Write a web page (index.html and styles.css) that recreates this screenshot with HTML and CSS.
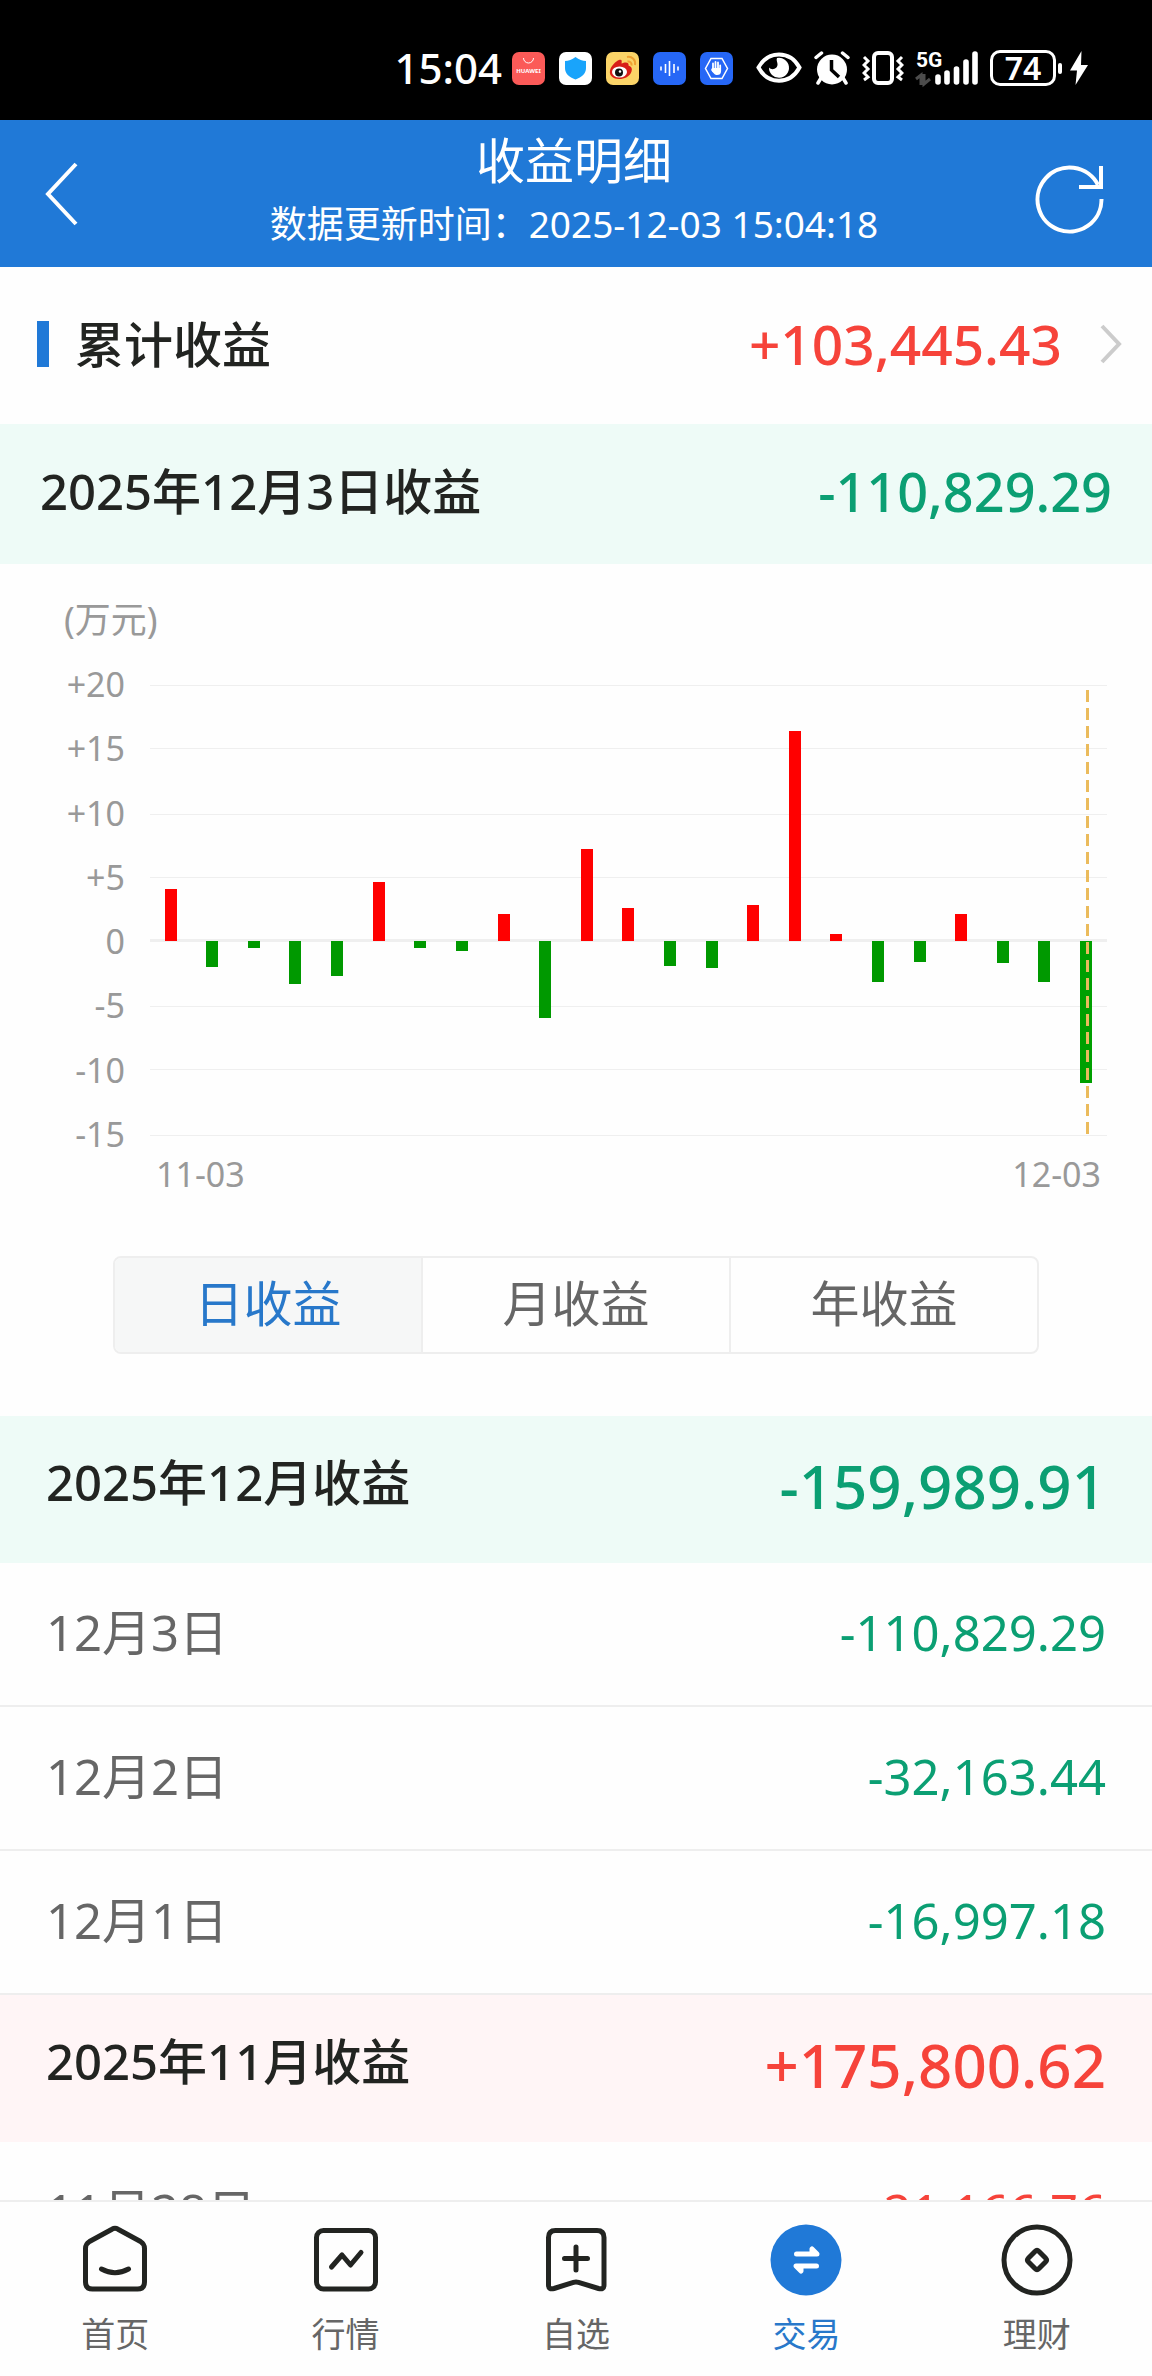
FILE: index.html
```html
<!DOCTYPE html>
<html lang="zh-CN">
<head>
<meta charset="utf-8">
<meta name="viewport" content="width=device-width, initial-scale=1">
<title>收益明细</title>
<link rel="stylesheet" href="styles.css">
</head>
<body>
<div class="status">
  <span class="status-time">15:04</span>
  <div class="status-apps">
    <svg class="app" viewBox="0 0 33 33"><rect width="33" height="33" rx="7" fill="#fb5a58"/><path d="M11.500 6a5 5 0 0 0 10 0" fill="none" stroke="#fff" stroke-width="1"/><text x="16.500" y="21" class="app-brand">HUAWEI</text></svg>
    <svg class="app" viewBox="0 0 33 33"><rect width="33" height="33" rx="7" fill="#fff"/><path d="M16.500 5c3.500 2.800 7 3.800 10.500 4v7c0 5.500-4 9-10.500 11.500C10 25 6 21.500 6 16V9c3.500-.2 7-1.200 10.500-4z" fill="#19a4fb"/></svg>
    <svg class="app" viewBox="0 0 33 33"><rect width="33" height="33" rx="7" fill="#fbd468"/><path d="M21 5c5-1 9 3 8 8M21.500 9.500c2.500-.5 4.500 1.500 4 4" fill="none" stroke="#f0a030" stroke-width="2"/><path d="M13 8c3-1 3 1 2.500 3.500 3-1.500 8-2 7 2 3 1 4 3 3 6-1.500 5-7 7.500-12.500 7.500S3 24 4 18.500C5 14 10 9 13 8z" fill="#d81e18"/><ellipse cx="13.500" cy="20" rx="7.500" ry="5.500" fill="#fff"/><circle cx="13" cy="20.500" r="4" fill="#111"/><circle cx="14" cy="19.500" r="1.200" fill="#fff"/></svg>
    <svg class="app" viewBox="0 0 33 33"><rect width="33" height="33" rx="7" fill="#2667f6"/><path d="M8 14.500v4M12.500 12v9M16.500 9v15M21 12v9M25 14.500v4" stroke="#fff" stroke-width="1.600"/></svg>
    <svg class="app" viewBox="0 0 33 33"><rect width="33" height="33" rx="7" fill="#2667f6"/><path d="M11 6.500h11l5.500 10-5.500 10H11l-5.500-10z" fill="none" stroke="#fff" stroke-width="1.500"/><path d="M13 19v-7.500M15.500 18v-8M18 18v-7.500M20.200 19v-5.500" stroke="#fff" stroke-width="1.800" stroke-linecap="round"/><path d="M12 16h9v3c0 3-1.500 4-4 4-2 0-3-1-6-5z" fill="#fff"/></svg>
  </div>
  <div class="status-icons">
    <svg width="46" height="33" viewBox="0 0 46 33"><path d="M2.500 16.500C12-1 34-1 43.500 16.500 34 34 12 34 2.500 16.500z" fill="none" stroke="#fff" stroke-width="4"/><path d="M21 7a10 10 0 1 1-8 9.500c3 3.500 9 1 8.500-3.500C21.400 11 20 9 21 7z" fill="#fff"/></svg>
    <svg width="36" height="34" viewBox="0 0 36 34"><circle cx="18" cy="18.500" r="15" fill="#fff"/><path d="M7 27l-3 5M29 27l3 5M2 6.500L7.500 2M34 6.500L28.500 2" stroke="#fff" stroke-width="3.500" stroke-linecap="round"/><path d="M17.500 9v10l7.500 7" fill="none" stroke="#000" stroke-width="3.500"/></svg>
    <svg width="42" height="34" viewBox="0 0 42 34"><rect x="12" y="2" width="18" height="30" rx="4" fill="none" stroke="#fff" stroke-width="4"/><path d="M2 6l4 4-4 4 4 4-4 4 4 4-4 3M40 6l-4 4 4 4-4 4 4 4-4 4 4 3" fill="none" stroke="#fff" stroke-width="3"/></svg>
    <svg class="signal" width="62" height="34" viewBox="0 0 62 34"><text x="0" y="16" class="net-label">5G</text><path d="M0 28l5-4v10M8 23v10l6-5" fill="none" stroke="#4c4c4c" stroke-width="3"/><path d="M22 26v5M31 22v9M40.500 18v13M50 11v20M59 3v28" stroke="#fff" stroke-width="5.600" stroke-linecap="round"/></svg>
  </div>
  <div class="battery">
    <span class="battery-level">74</span>
    <span class="battery-tip"></span>
    <svg width="18" height="34" viewBox="0 0 18 34"><path d="M11.500 0L0 19.500h7L5.500 34 18 14h-7z" fill="#fff"/></svg>
  </div>
</div>

<header class="header">
  <button class="icon-button" type="button" aria-label="返回"><svg width="35" height="64" viewBox="0 0 35 64"><path d="M32 2L4 32l28 30" fill="none" stroke="#fff" stroke-width="4"/></svg></button>
  <div class="header-text">
    <h1 class="title">收益明细</h1>
    <p class="updated">数据更新时间：2025-12-03 15:04:18</p>
  </div>
  <button class="icon-button refresh" type="button" aria-label="刷新"><svg width="70" height="70" viewBox="0 0 70 70"><path d="M67.500 35A32 32 0 1 1 64 21M67 2v21H45" fill="none" stroke="#fff" stroke-width="4"/></svg></button>
</header>

<main class="content">
  <a class="total" href="#">
    <span class="total-label">累计收益</span>
    <span class="total-value up">+103,445.43</span>
    <svg width="22" height="40" viewBox="0 0 22 40"><path d="M2 2l17 18L2 38" fill="none" stroke="#ccc" stroke-width="4"/></svg>
  </a>

  <section class="today">
    <h2 class="label">2025年12月3日收益</h2>
    <span class="today-value down">-110,829.29</span>
  </section>

  <section class="chart">
    <p class="unit">(万元)</p>
    <div class="plot">
      <div class="y-axis"><span>+20</span><span>+15</span><span>+10</span><span>+5</span><span>0</span><span>-5</span><span>-10</span><span>-15</span></div>
      <svg class="bars" viewBox="0 0 957 451">
        <g fill="#efefef"><rect y="0" width="957" height="1"/><rect y="63" width="957" height="1"/><rect y="129" width="957" height="1"/><rect y="192" width="957" height="1"/><rect y="254" width="957" height="3"/><rect y="321" width="957" height="1"/><rect y="384" width="957" height="1"/><rect y="450" width="957" height="1"/></g>
        <g fill="#f00"><rect x="15" y="204" width="12" height="52"/><rect x="223" y="197" width="12" height="59"/><rect x="348" y="229" width="12" height="27"/><rect x="431" y="164" width="12" height="92"/><rect x="472" y="223" width="12" height="33"/><rect x="597" y="220" width="12" height="36"/><rect x="639" y="46" width="12" height="210"/><rect x="680" y="249" width="12" height="7"/><rect x="805" y="229" width="12" height="27"/></g>
        <g fill="#090"><rect x="56" y="256" width="12" height="26"/><rect x="98" y="256" width="12" height="7"/><rect x="139" y="256" width="12" height="43"/><rect x="181" y="256" width="12" height="35"/><rect x="264" y="256" width="12" height="7"/><rect x="306" y="256" width="12" height="10"/><rect x="389" y="256" width="12" height="77"/><rect x="514" y="256" width="12" height="25"/><rect x="556" y="256" width="12" height="27"/><rect x="722" y="256" width="12" height="41"/><rect x="764" y="256" width="12" height="21"/><rect x="847" y="256" width="12" height="22"/><rect x="888" y="256" width="12" height="41"/><rect x="930" y="256" width="12" height="142" fill="#00a000"/></g>
        <path d="M937.500 5v444" stroke="#ebbb5c" stroke-width="3" stroke-dasharray="12 6"/>
      </svg>
    </div>
    <div class="x-axis"><span>11-03</span><span>12-03</span></div>
  </section>

  <div class="tabs" role="tablist">
    <button class="tab tab-active" type="button" role="tab" aria-selected="true">日收益</button>
    <button class="tab" type="button" role="tab" aria-selected="false">月收益</button>
    <button class="tab" type="button" role="tab" aria-selected="false">年收益</button>
  </div>

  <section>
    <div class="month month-down"><h2 class="label">2025年12月收益</h2><span class="month-value down">-159,989.91</span></div>
    <div class="day"><span>12月3日</span><span class="down">-110,829.29</span></div>
    <div class="day"><span>12月2日</span><span class="down">-32,163.44</span></div>
    <div class="day"><span>12月1日</span><span class="down">-16,997.18</span></div>
  </section>
  <section>
    <div class="month month-up"><h2 class="label">2025年11月收益</h2><span class="month-value up">+175,800.62</span></div>
    <div class="day"><span>11月28日</span><span class="up">+21,166.76</span></div>
  </section>
</main>

<nav class="nav">
  <a class="nav-item" href="#"><svg class="nav-icon" viewBox="0 0 72 72"><path d="M33 5.200q3-1.800 6 0l22.500 12.300q4 2.500 4 7V58q0 7-7 7h-45q-7 0-7-7V24.500q0-4.500 4-7zM22.500 45q13.500 7.500 27 0"/></svg>首页</a>
  <a class="nav-item" href="#"><svg class="nav-icon" viewBox="0 0 72 72"><rect x="6.500" y="6.500" width="59" height="58.500" rx="7"/><path d="M21.500 43L32 31l8.500 10L51 28.500"/></svg>行情</a>
  <a class="nav-item" href="#"><svg class="nav-icon" viewBox="0 0 72 72"><path d="M8.500 13.500q0-7 7-7h41.500q7 0 7 7V61q0 5-5.500 3.500L38.500 58.300q-2.500-.8-5 0L14 64.500Q8.500 66 8.500 61zM24.500 34.500h23M36 23v23"/></svg>自选</a>
  <a class="nav-item nav-active" href="#" aria-current="page"><svg class="nav-icon" viewBox="0 0 72 72"><circle cx="36" cy="36" r="35.500" fill="#2079d7" stroke="none"/><path d="M26.500 30H47l-5-5v5M46.500 42H26l5 5v-5" stroke="#fff"/></svg>交易</a>
  <a class="nav-item" href="#"><svg class="nav-icon" viewBox="0 0 72 72"><circle cx="36" cy="36" r="33"/><path d="M34 27.500q2-2 4 0l6.500 6.500q2 2 0 4L38 44.500q-2 2-4 0L27.500 38q-2-2 0-4z"/></svg>理财</a>
</nav>
</body>
</html>
```
FILE: styles.css
```css
* { box-sizing: border-box; }

body {
  margin: 0;
  height: 100vh;
  display: flex;
  flex-direction: column;
  background: #fefefe;
  color: #222421;
  font-family: "Noto Sans", "Noto Sans CJK SC", sans-serif;
  font-size: 49px;
  line-height: 60px;
}

h1, h2, p { margin: 0; font-weight: inherit; font-size: inherit; }
a { color: inherit; text-decoration: none; }
button { font: inherit; color: inherit; background: none; border: 0; padding: 0; }
svg { display: block; flex: none; }

.up { color: #f6433a; }
.down { color: #0b9f73; }

/* status bar */
.status {
  flex: none;
  height: 120px;
  padding: 16px 64px 0 0;
  display: flex;
  align-items: center;
  justify-content: flex-end;
  background: #000;
  color: #fff;
}
.status-time { font-size: 42px; font-weight: 500; margin-right: 10px; }
.status-apps { display: flex; gap: 14px; margin-right: 23px; }
.app { width: 33px; height: 33px; }
.app-brand { font-size: 6px; font-weight: 700; fill: #fff; text-anchor: middle; }
.status-icons { display: flex; gap: 12px; margin-right: 12px; }
.signal { overflow: visible; }
.net-label { font-family: Roboto, sans-serif; font-size: 21px; font-weight: 700; fill: #fff; }
.battery { display: flex; align-items: center; }
.battery-level {
  width: 66px;
  height: 36px;
  border: 3px solid #fff;
  border-radius: 10px;
  font-size: 32px;
  font-weight: 600;
  line-height: 30px;
  text-align: center;
}
.battery-tip { width: 4px; height: 11px; margin: 0 8px 0 2px; border-radius: 2px; background: #fff; }

/* page header */
.header {
  flex: none;
  height: 147px;
  padding: 0 48px 0 44px;
  display: flex;
  align-items: center;
  justify-content: space-between;
  background: #2079d7;
  color: #fff;
}
.icon-button { width: 70px; }
.refresh { padding-top: 10px; }
.header-text { text-align: center; }
.title { font-size: 49px; }
.updated { font-size: 37px; line-height: 68px; }

.content { flex: 1; min-height: 0; overflow-y: auto; scrollbar-width: none; }

/* cumulative total */
.total { height: 157px; padding: 0 30px 4px 37px; display: flex; align-items: center; }
.total-label { display: flex; align-items: center; gap: 26px; font-weight: 500; }
.total-label::before { content: ""; width: 12px; height: 46px; background: #2079d7; }
.total-value { margin: 0 38px 0 auto; font-size: 55px; font-weight: 500; }

.label { font-weight: 500; }
.today {
  height: 140px;
  padding: 0 40px 6px;
  display: flex;
  align-items: center;
  justify-content: space-between;
  background: #eefbf7;
}
.today-value { font-size: 54px; font-weight: 500; }

/* chart */
.chart { padding: 36px 45px 0 64px; color: #999; font-size: 34px; line-height: 40px; }
.unit { font-size: 36px; }
.plot { display: grid; grid-template-columns: 61px 1fr; column-gap: 25px; margin-top: 24px; }
.y-axis { display: flex; flex-direction: column; align-items: flex-end; justify-content: space-between; }
.bars { width: 100%; height: auto; margin: 21px 0 18px; }
.x-axis { display: flex; justify-content: space-between; padding: 0 6px 0 92px; }

/* period switch */
.tabs {
  display: flex;
  margin: 62px 113px;
  border: 2px solid #eee;
  border-radius: 8px;
  overflow: hidden;
}
.tab { flex: 1; height: 94px; padding-bottom: 4px; color: #666; }
.tab + .tab { border-left: 2px solid #eee; }
.tab-active { background: #f6f7f7; color: #2878ca; }

/* month groups */
.month {
  height: 147px;
  padding: 0 46px 8px;
  display: flex;
  align-items: center;
  justify-content: space-between;
}
.month .label { padding-bottom: 8px; }
.month-down { background: #eefbf7; }
.month-up { background: #fff5f6; }
.month-value { font-size: 60px; font-weight: 500; }
.day {
  height: 144px;
  padding: 0 46px 4px;
  display: flex;
  align-items: center;
  justify-content: space-between;
  border-bottom: 2px solid #eee;
  color: #666;
}

/* bottom navigation */
.nav {
  flex: none;
  height: 176px;
  padding-top: 22px;
  display: flex;
  border-top: 2px solid #eee;
  background: #fefefe;
  font-size: 34px;
  line-height: 40px;
  color: #666;
}
.nav-item { flex: 1; display: flex; flex-direction: column; align-items: center; gap: 18px; }
.nav-active { color: #2878ca; }
.nav-icon {
  width: 72px;
  height: 72px;
  fill: none;
  stroke: #222421;
  stroke-width: 5;
  stroke-linecap: round;
  stroke-linejoin: round;
}
```
